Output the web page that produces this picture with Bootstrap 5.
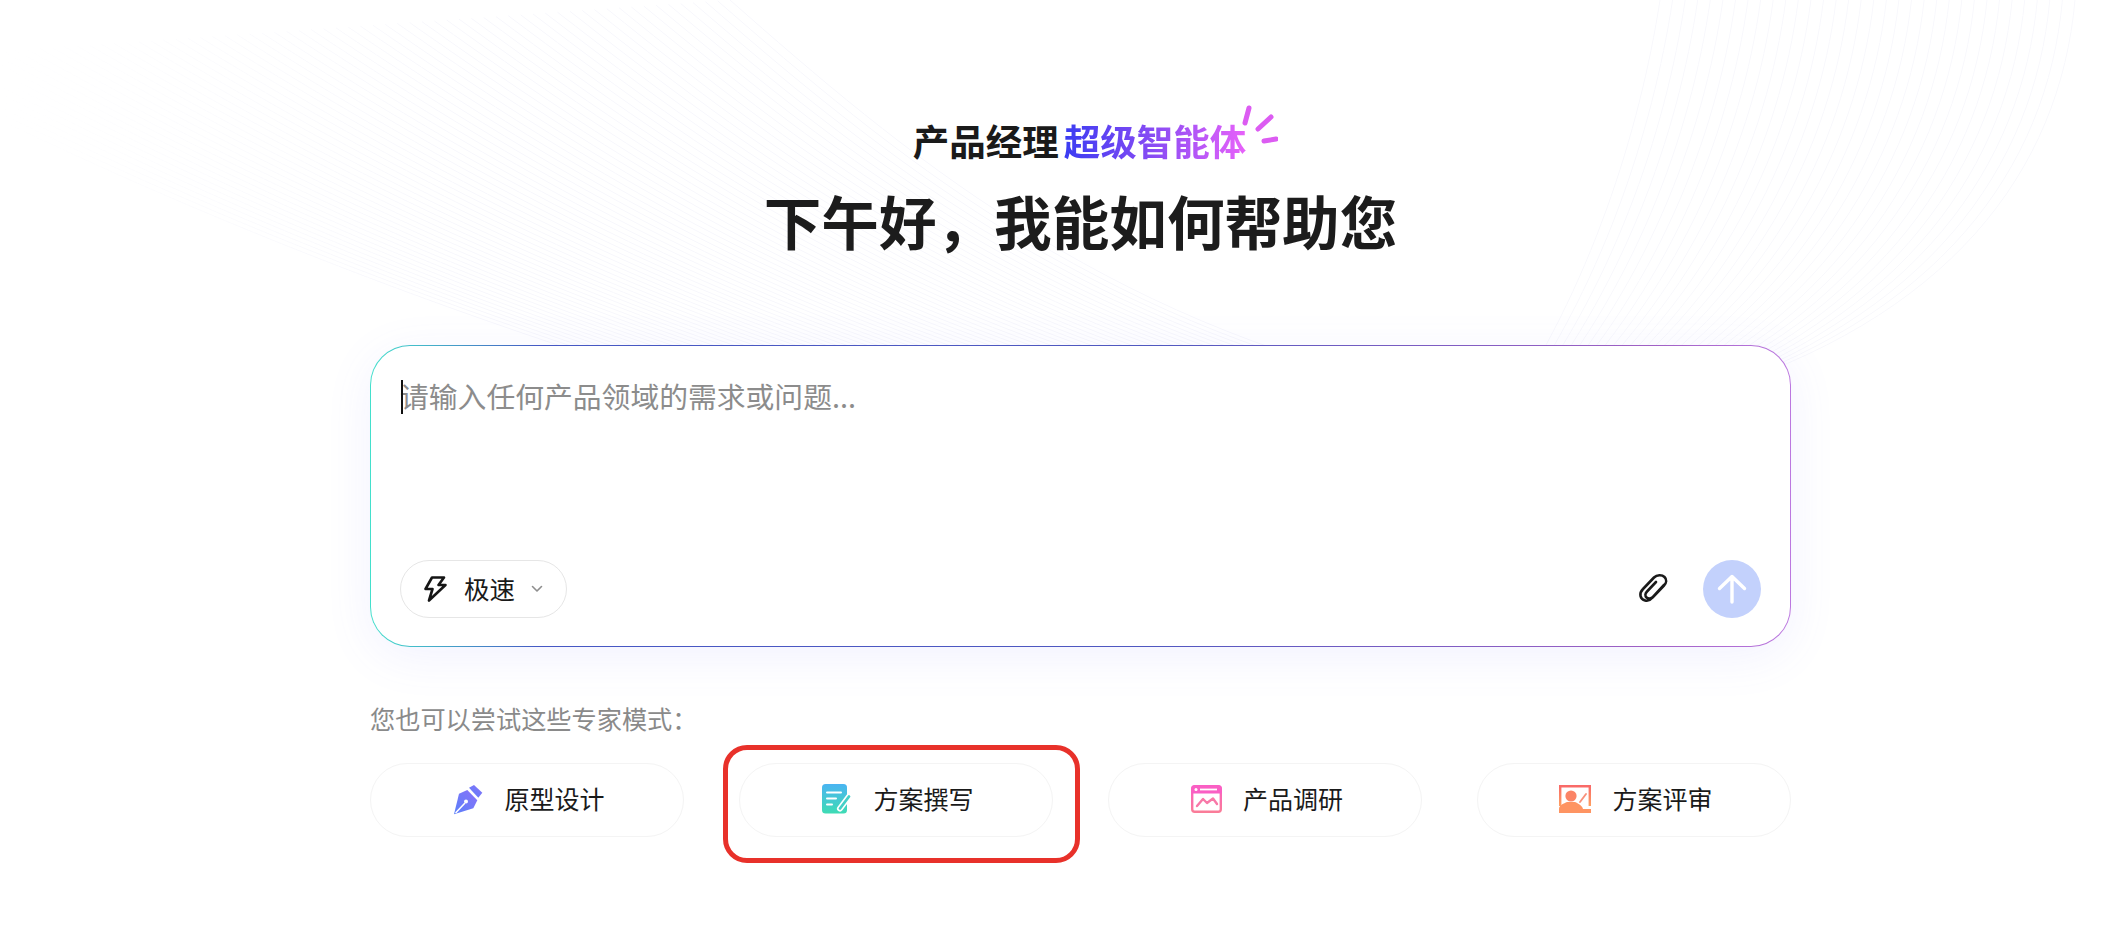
<!DOCTYPE html>
<html lang="zh-CN">
<head>
    <meta charset="UTF-8">
    <meta name="viewport" content="width=device-width, initial-scale=1.0">
    <title>产品经理超级智能体</title>
    <link href="https://cdn.jsdelivr.net/npm/bootstrap@5.3.0/dist/css/bootstrap.min.css" rel="stylesheet">
    <script src="https://cdn.jsdelivr.net/npm/bootstrap@5.3.0/dist/js/bootstrap.bundle.min.js"></script>
    <style>
        body { background: #fff; height: 926px; overflow: hidden; color: #1a1a1a; font-family: "Noto Sans CJK SC", "Liberation Sans", sans-serif; }
        .bg-waves { position: absolute; left: 0; top: 0; width: 2124px; height: 420px; z-index: 0; -webkit-mask-image: linear-gradient(90deg, transparent 0, #000 22%, #000 100%); mask-image: linear-gradient(90deg, transparent 0, #000 22%, #000 100%); }
        .page-col { position: relative; z-index: 1; width: 1421px; margin-left: 370px; padding-top: 116px; }
        .eyebrow { font-size: 36.5px; line-height: 50px; font-weight: 700; padding-right: 2px; }
        .eyebrow-wrap { position: relative; }
        .grad-text { margin-left: 5px; background: linear-gradient(90deg, #3a3cf2 0%, #8a4cf4 50%, #e862fa 100%); -webkit-background-clip: text; background-clip: text; color: transparent; }
        .sparks { position: absolute; left: 100%; top: -11px; margin-left: -8px; width: 38px; height: 40px; }
        .hero-title { font-size: 57.6px; line-height: 80px; font-weight: 700; margin: 14px 0 0; color: #1c1c1c; }
        .ask-box { height: 302px; margin-top: 85px; padding: 30px 29px 28px; border: 1px solid transparent; border-radius: 40px; background: linear-gradient(#fff, #fff) padding-box, linear-gradient(90deg, #43e0cc 0%, #4658c4 12%, #5058c0 55%, #a060c4 90%, #bc78e0 100%) border-box; box-shadow: 0 10px 48px rgba(110, 110, 255, .09); position: relative; }
        .ask-input { border: 0; padding: 0; font-size: 28.8px; line-height: 40px; resize: none; box-shadow: none !important; background: transparent; }
        .ask-input::placeholder { color: #8c8c8c; opacity: 1; }
        .caret-bar { position: absolute; left: 30px; top: 34px; width: 2px; height: 34px; background: #111; }
        .speed-pill { width: 167px; height: 58px; border: 1px solid #e6e6e6; border-radius: 29px; background: #fff; font-size: 25.5px; color: #1a1a1a; padding: 0 0 0 22px; }
        .speed-label { margin: 0 16px 2px 17px; }
        .send-btn { width: 58px; height: 58px; border-radius: 50%; border: 0; padding: 0; background: #c3d1fc; }
        .clip-btn { width: 30px; height: 32px; margin-right: 35px; }
        .hint-text { font-size: 25.2px; line-height: 34px; color: #8a8a8a; margin-top: 54px; }
        .mode-row { margin-top: 28px; column-gap: 55px; }
        .mode-btn { width: 314px; height: 74px; border: 1px solid #f4f4f4; border-radius: 37px; background: #fff; font-size: 25px; color: #1a1a1a; gap: 21px; padding: 0 0 2px 4px; position: relative; }
        .red-frame { position: absolute; left: -17px; top: -19px; width: 357px; height: 118px; border: 5px solid #e8312a; border-radius: 24px; pointer-events: none; }
    </style>
</head>
<body>
    <svg class="bg-waves" id="waves" viewBox="0 0 2124 420" fill="none"></svg>

    <div class="page-col">
        <div class="d-flex flex-column align-items-center">
            <div class="eyebrow eyebrow-wrap">产品经理<span class="grad-text">超级智能体</span>
                <svg class="sparks" viewBox="0 0 38 40" fill="none" stroke="#dc5cf2" stroke-width="5" stroke-linecap="round">
                    <path d="M9 3 L5 18"/>
                    <path d="M31 12 L18 24"/>
                    <path d="M36 34 L24 36"/>
                </svg>
            </div>
            <h1 class="hero-title">下午好，我能如何帮助您</h1>
        </div>

        <div class="ask-box d-flex flex-column">
            <textarea class="form-control ask-input flex-grow-1" placeholder="请输入任何产品领域的需求或问题..."></textarea>
            <span class="caret-bar"></span>
            <div class="d-flex align-items-center justify-content-between">
                <button type="button" class="btn speed-pill d-flex align-items-center">
                    <svg width="24" height="26" viewBox="0 0 24 26" fill="none" stroke="#151515" stroke-width="2.6" stroke-linejoin="round" stroke-linecap="round"><path d="M9 1.5 H21 L15.5 9 H22.5 L6 24.5 L9.5 13 H2.5 Z"/></svg>
                    <span class="speed-label">极速</span>
                    <svg width="12" height="8" viewBox="0 0 12 8" fill="none" stroke="#8e8e8e" stroke-width="1.6" stroke-linecap="round" stroke-linejoin="round"><path d="M1.5 1.5 L6 6 L10.5 1.5"/></svg>
                </button>
                <div class="d-flex align-items-center">
                    <svg class="clip-btn" viewBox="0 0 30 32" fill="none" stroke="#1a1a1a" stroke-width="2.6" stroke-linecap="round" stroke-linejoin="round">
                        <path d="M26 12 L14 25 C10 30 3.5 27.5 2.5 23 C2 20.5 3 18 5 16 L16 4.5 C19 1.5 24 1.5 26.5 4 C29 6.5 28.5 10 26 12.5 L15 24 C13 26 10 26 8.5 24.5 C7 23 7 20.5 9 18.5 L18 9"/>
                    </svg>
                    <button type="button" class="send-btn d-flex align-items-center justify-content-center" aria-label="发送">
                        <svg width="30" height="30" viewBox="0 0 30 30" fill="none" stroke="#fff" stroke-width="3.4" stroke-linecap="round" stroke-linejoin="round"><path d="M15 28 V2.5 M2.5 14.5 L15 2.5 L27.5 14.5"/></svg>
                    </button>
                </div>
            </div>
        </div>

        <div class="hint-text">您也可以尝试这些专家模式：</div>

        <div class="d-flex mode-row">
            <button type="button" class="btn mode-btn d-flex align-items-center justify-content-center">
                <svg width="30" height="31" viewBox="0 0 30 31">
                    <defs><linearGradient id="penG" x1="1" y1="0" x2="0" y2="1"><stop offset="0" stop-color="#8a72f8"/><stop offset="1" stop-color="#5a80fa"/></linearGradient></defs>
                    <path fill="url(#penG)" d="M16 3.7 L21 1 L29.3 8.7 L25.3 13.7 Z"/>
                    <path fill="url(#penG)" d="M6 9.7 L14.3 6 L24.3 16.3 L20.3 24.3 L1 30.3 Z"/>
                    <path fill="none" stroke="#fff" stroke-width="1.6" stroke-linecap="round" d="M3 28.5 L11.5 19.5"/>
                    <circle cx="13" cy="17.5" r="2" fill="#fff"/>
                </svg>
                <span>原型设计</span>
            </button>
            <button type="button" class="btn mode-btn d-flex align-items-center justify-content-center">
                <svg width="30" height="30" viewBox="0 0 30 30">
                    <defs><linearGradient id="docG" x1="0" y1="0" x2="0" y2="1"><stop offset="0" stop-color="#4ab4f2"/><stop offset="1" stop-color="#3edcb4"/></linearGradient></defs>
                    <rect x="0" y="0" width="25" height="29.5" rx="3.5" fill="url(#docG)"/>
                    <path fill="none" stroke="#fff" stroke-width="2" stroke-linecap="round" d="M5 8.5 H19 M5 14.5 H14 M5 20.5 H10"/>
                    <path fill="none" stroke="#fff" stroke-width="6" stroke-linecap="round" d="M27 12.5 L18 24.5"/>
                    <path fill="none" stroke="#44d0c8" stroke-width="2.8" stroke-linecap="round" d="M27 12.5 L18 24.5"/>
                </svg>
                <span>方案撰写</span>
                <span class="red-frame"></span>
            </button>
            <button type="button" class="btn mode-btn d-flex align-items-center justify-content-center">
                <svg width="31" height="28" viewBox="0 0 31 28">
                    <defs><linearGradient id="chartG" x1="0" y1="0" x2="0" y2="1"><stop offset="0" stop-color="#fa5fc4"/><stop offset="1" stop-color="#fa7c98"/></linearGradient></defs>
                    <rect x="1.2" y="1.2" width="28.6" height="25.6" rx="2.5" fill="none" stroke="url(#chartG)" stroke-width="2.4"/>
                    <path fill="#fa5fc4" d="M3 0.5 H28 A2.5 2.5 0 0 1 30.5 3 V8.5 H0.5 V3 A2.5 2.5 0 0 1 3 0.5 Z"/>
                    <circle cx="5" cy="4.5" r="1.5" fill="#fff"/>
                    <path stroke="#fff" stroke-width="1.8" d="M9 4.5 H26"/>
                    <path fill="none" stroke="#f878a8" stroke-width="2.4" stroke-linecap="round" stroke-linejoin="round" d="M6 21 L12 14 L16 18 L22 13.5 L26 19"/>
                </svg>
                <span>产品调研</span>
            </button>
            <button type="button" class="btn mode-btn d-flex align-items-center justify-content-center">
                <svg width="32" height="28" viewBox="0 0 32 28">
                    <defs><linearGradient id="revG" x1="0" y1="0" x2="0" y2="1"><stop offset="0" stop-color="#f96a68"/><stop offset="1" stop-color="#ffa060"/></linearGradient></defs>
                    <path fill="none" stroke="url(#revG)" stroke-width="2.4" d="M1.2 21 V1.2 H30.8 V21"/>
                    <circle cx="12" cy="11" r="5.6" fill="#fb8466"/>
                    <path fill="#fe9462" d="M0 28 V24 C0 20 5 18.5 8 17 H16 C19 18.5 23.5 20.5 24 24 H32 V28 Z"/>
                    <path stroke="#f8907a" stroke-width="1.8" stroke-linecap="round" d="M27 9 L21 17"/>
                </svg>
                <span>方案评审</span>
            </button>
        </div>
    </div>

    <script>
        // faint line bundles behind the header
        const waves = document.getElementById("waves");
        function lerp(a, b, t) { return a + (b - a) * t; }
        function bundle(n, a, b, color) {
            let html = "";
            for (let i = 0; i < n; i++) {
                const t = i / (n - 1);
                const p = a.map((v, k) => lerp(v, b[k], t).toFixed(1));
                html += `<path d="M${p[0]} ${p[1]} C${p[2]} ${p[3]} ${p[4]} ${p[5]} ${p[6]} ${p[7]}" stroke="${color}"/>`;
            }
            return html;
        }
        waves.innerHTML =
            bundle(70, [-120, 60, 150, 200, 450, 320, 800, 420], [730, 0, 900, 150, 1100, 320, 1420, 390], "#f7f7fc") +
            bundle(34, [1660, 0, 1640, 130, 1590, 290, 1500, 420], [2075, 0, 2060, 170, 1950, 320, 1700, 395], "#f8f8fc");
    </script>
</body>
</html>
